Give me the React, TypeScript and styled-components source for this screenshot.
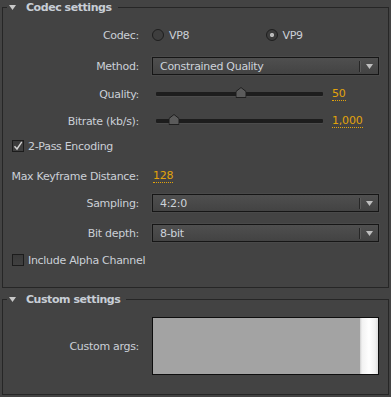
import React from "react";
import styled, { createGlobalStyle } from "styled-components";

const Global = createGlobalStyle`
  html, body { margin: 0; padding: 0; background: #434343; }
  body {
    font-family: "DejaVu Sans", "Liberation Sans", sans-serif;
    font-size: 11px;
    color: #cbd0d7;
    -webkit-font-smoothing: antialiased;
  }
`;

const Page = styled.div`
  width: 391px;
  height: 397px;
  box-sizing: border-box;
  padding: 0 2px;
  overflow: hidden;
`;

const Section = styled.fieldset<{ $mt?: number; $pb: number }>`
  margin: ${(p) => p.$mt ?? 0}px 0 0;
  padding: 0 0 ${(p) => p.$pb}px;
  border: 1px solid #262626;
  min-width: 0;
`;

const Legend = styled.legend`
  margin-left: 4px;
  padding: 0 6px 0 2px;
  display: flex;
  align-items: center;
  gap: 10px;
  font-weight: bold;
  font-size: 11px;
  line-height: 15px;
  letter-spacing: -0.45px;
  color: #c8ced6;
`;

const FieldRow = styled.div<{ $mt: number; $h?: number }>`
  display: grid;
  grid-template-columns: 136px 1fr;
  column-gap: 13px;
  align-items: center;
  margin-top: ${(p) => p.$mt}px;
  height: ${(p) => p.$h ?? 18}px;
  padding-right: 9px;
`;

const Label = styled.span`
  text-align: right;
  white-space: nowrap;
  letter-spacing: -0.3px;
`;

const CheckRow = styled.label<{ $mt: number }>`
  display: flex;
  align-items: center;
  gap: 4px;
  height: 18px;
  margin-top: ${(p) => p.$mt}px;
  padding-left: 9px;
  letter-spacing: -0.3px;
`;

const Box = styled.span`
  width: 12px;
  height: 12px;
  box-sizing: border-box;
  border: 1px solid #1c1c1c;
  background: linear-gradient(#3a3a3a, #404040);
  display: flex;
  align-items: center;
  justify-content: center;
`;

const RadioGroup = styled.div`
  display: grid;
  grid-template-columns: 1fr 1fr;
`;

const RadioItem = styled.span`
  display: flex;
  align-items: center;
  gap: 5px;
  letter-spacing: -0.3px;
`;

const RadioCircle = styled.span<{ $checked?: boolean }>`
  width: 12px;
  height: 12px;
  box-sizing: border-box;
  border-radius: 50%;
  border: 1px solid #1e1e1e;
  background: ${(p) =>
    p.$checked
      ? "radial-gradient(circle, #b9b9b9 0 1.8px, #3c3c3c 2.4px)"
      : "#3e3e3e"};
`;

const SelectBox = styled.div`
  height: 18px;
  box-sizing: border-box;
  border: 1px solid #161616;
  background: linear-gradient(#4f4f4f, #434343);
  box-shadow: 0 0 0 1px #494949;
  display: flex;
  align-items: center;
  padding-left: 7px;
`;

const SelectText = styled.span`
  flex: 1;
  letter-spacing: -0.3px;
  color: #cdd3da;
`;

const Divider = styled.span`
  width: 1px;
  height: 11px;
  background: #262626;
  box-shadow: 1px 0 0 #5a5a5a;
`;

const ArrowWrap = styled.span`
  width: 18px;
  display: flex;
  justify-content: center;
  align-items: center;
`;

const SliderWrap = styled.div`
  display: flex;
  align-items: center;
  gap: 9px;
  padding-left: 4px;
`;

const Track = styled.div`
  position: relative;
  flex: 1;
  height: 4px;
  background: #1d1d1d;
  border-radius: 1px;
  box-shadow: 0 1px 0 #4c4c4c;
`;

const Thumb = styled.span`
  position: absolute;
  top: -5px;
  width: 11px;
  height: 11px;
  transform: translateX(-50%);
  display: block;
`;

const Value = styled.span`
  width: 47px;
  color: #e2a30c;
  letter-spacing: -0.2px;
  line-height: 12px;
  & > span {
    border-bottom: 1px dotted #e2a30c;
    padding-bottom: 0px;
  }
`;

const KeyValue = styled(Value)`
  margin-left: 1px;
`;

const ArgsBox = styled.div`
  height: 58px;
  box-sizing: border-box;
  border: 1px solid #0e0e0e;
  background: #a3a3a3;
  display: flex;
  justify-content: flex-end;
`;

const Scroll = styled.div`
  width: 18px;
  background: linear-gradient(
    90deg,
    #d0d0d0 0,
    #f2f2f2 2px,
    #ffffff 50%,
    #f0f0f0 85%,
    #dcdcdc 100%
  );
`;

const Triangle = () => (
  <svg width="7" height="5" viewBox="0 0 7 5">
    <polygon points="0,0 7,0 3.5,5" fill="#c9c9c9" />
  </svg>
);

const SmallArrow = () => (
  <svg width="7" height="5" viewBox="0 0 7 5">
    <polygon points="0,0 7,0 3.5,5" fill="#bfbfbf" />
  </svg>
);

const Check = () => (
  <svg width="10" height="10" viewBox="0 0 10 10">
    <path d="M1.5 5.2 L4 8 L8.8 0.8" fill="none" stroke="#d2d2d2" strokeWidth="1.4" />
  </svg>
);

const ThumbShape = () => (
  <svg width="11" height="11" viewBox="0 0 11 11">
    <polygon
      points="5.5,0.5 10.5,4.5 10.5,10.5 0.5,10.5 0.5,4.5"
      fill="#5b5b5b"
      stroke="#1f1f1f"
      strokeWidth="1"
    />
  </svg>
);

const Select = ({ value }: { value: string }) => (
  <SelectBox>
    <SelectText>{value}</SelectText>
    <Divider />
    <ArrowWrap>
      <SmallArrow />
    </ArrowWrap>
  </SelectBox>
);

const Slider = ({ pct, value }: { pct: number; value: string }) => (
  <SliderWrap>
    <Track>
      <Thumb style={{ left: `${pct}%` }}>
        <ThumbShape />
      </Thumb>
    </Track>
    <Value>
      <span>{value}</span>
    </Value>
  </SliderWrap>
);

export default function App() {
  return (
    <>
      <Global />
      <Page>
        <Section $pb={18}>
          <Legend>
            <Triangle />
            Codec settings
          </Legend>
          <FieldRow $mt={11}>
            <Label>Codec:</Label>
            <RadioGroup>
              <RadioItem>
                <RadioCircle />
                VP8
              </RadioItem>
              <RadioItem>
                <RadioCircle $checked />
                VP9
              </RadioItem>
            </RadioGroup>
          </FieldRow>
          <FieldRow $mt={13}>
            <Label>Method:</Label>
            <Select value="Constrained Quality" />
          </FieldRow>
          <FieldRow $mt={10}>
            <Label>Quality:</Label>
            <Slider pct={51} value="50" />
          </FieldRow>
          <FieldRow $mt={9}>
            <Label>Bitrate (kb/s):</Label>
            <Slider pct={10.5} value="1,000" />
          </FieldRow>
          <CheckRow $mt={7}>
            <Box>
              <Check />
            </Box>
            2-Pass Encoding
          </CheckRow>
          <FieldRow $mt={12}>
            <Label>Max Keyframe Distance:</Label>
            <KeyValue>
              <span>128</span>
            </KeyValue>
          </FieldRow>
          <FieldRow $mt={9}>
            <Label>Sampling:</Label>
            <Select value="4:2:0" />
          </FieldRow>
          <FieldRow $mt={12}>
            <Label>Bit depth:</Label>
            <Select value="8-bit" />
          </FieldRow>
          <CheckRow $mt={9}>
            <Box />
            Include Alpha Channel
          </CheckRow>
        </Section>
        <Section $mt={4} $pb={19}>
          <Legend>
            <Triangle />
            Custom settings
          </Legend>
          <FieldRow $mt={10} $h={58}>
            <Label>Custom args:</Label>
            <ArgsBox>
              <Scroll />
            </ArgsBox>
          </FieldRow>
        </Section>
      </Page>
    </>
  );
}
